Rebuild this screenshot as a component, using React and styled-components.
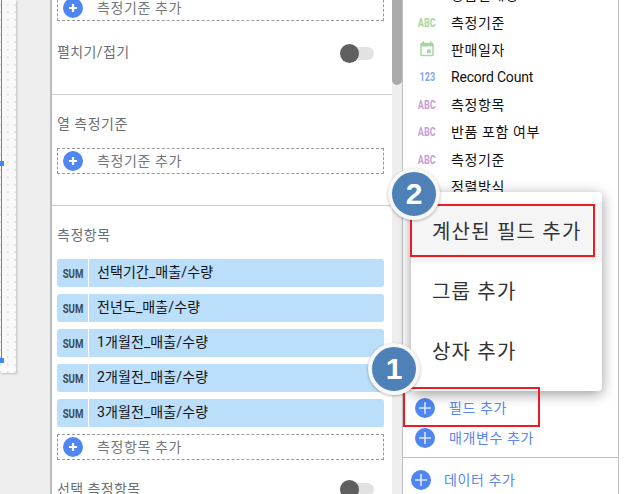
import React from 'react';
import styled, { createGlobalStyle } from 'styled-components';
import { MdEvent } from 'react-icons/md';

const FONT = `Roboto, "Noto Sans CJK KR", sans-serif`;

const GlobalStyle = createGlobalStyle`
    html, body {
        margin: 0;
        padding: 0;
        background: #fff;
    }
    * {
        box-sizing: border-box;
    }
`;

const Page = styled.div`
    position: relative;
    display: flex;
    width: 625px;
    height: 494px;
    overflow: hidden;
    background: #fff;
    font-family: ${FONT};
`;

const CanvasArea = styled.div`
    width: 50px;
    flex: none;
    background: #eeeeee;
`;

const Canvas = styled.div`
    position: relative;
    width: 16px;
    height: 373px;
    background-color: #f9f9f9;
    background-image: radial-gradient(circle, #e0e0e0 1px, transparent 1.4px);
    background-size: 7.5px 7.5px;
    background-position: 4px 1px;
    box-shadow: 1px 1px 2px rgba(0, 0, 0, 0.2);
`;

const SelectLine = styled.div`
    position: absolute;
    left: 1px;
    top: 0;
    width: 1px;
    height: 360px;
    background: #4a86e8;
`;

const SelectHandle = styled.div`
    position: absolute;
    left: 0;
    top: ${props => props.$top}px;
    width: 4px;
    height: 5px;
    background: #4285f4;
`;

const Panel = styled.div`
    width: 342px;
    flex: none;
    overflow: hidden;
    background: #fff;
    border-left: 2px solid #b9bcc0;
`;

const PanelInner = styled.div`
    margin-top: -5px;
`;

const Section = styled.section`
    padding: ${props => props.$top}px 8px 31px 5px;
    border-bottom: 1px solid #cccccc;

    &:last-child {
        border-bottom: 0;
    }
`;

const SectionTitle = styled.div`
    height: 20px;
    line-height: 20px;
    font-size: 14px;
    letter-spacing: 0.5px;
    color: #6b6e72;
    margin-bottom: 14px;
`;

// Noto sits a bit lower than the reference's face, so labels are nudged up in the flex row
const Label = styled.span`
    margin-bottom: ${props => props.$lift ?? 2}px;
    letter-spacing: ${props => props.$spacing ?? 0.6}px;
`;

const ToggleRow = styled.div`
    display: flex;
    align-items: center;
    justify-content: space-between;
    height: 20px;
    margin-top: ${props => props.$top}px;
    padding-right: 10px;
    font-size: 14px;
    color: #6b6e72;
`;

const Toggle = styled.div`
    position: relative;
    width: 34px;
    height: 13px;
`;

const ToggleTrack = styled.div`
    position: absolute;
    right: 0;
    top: 0;
    width: 29px;
    height: 13px;
    border-radius: 7px;
    background: #e2e2e2;
`;

const ToggleKnob = styled.div`
    position: absolute;
    left: 0;
    top: -3px;
    width: 19px;
    height: 19px;
    border-radius: 50%;
    background: #5f5f5f;
`;

const AddBox = styled.div`
    display: flex;
    align-items: center;
    gap: 14px;
    height: 26px;
    margin-top: ${props => props.$top || 0}px;
    padding-left: 5px;
    border: 1px dashed #999999;
    font-size: 14px;
    color: #74777b;
`;

const MetricList = styled.div`
    display: flex;
    flex-direction: column;
    gap: 7px;
`;

const Metric = styled.div`
    display: flex;
    height: 28px;
    border-radius: 3px;
    overflow: hidden;
    background: #bbdefb;
    font-size: 14px;
    color: #111;
`;

const Agg = styled.div`
    display: flex;
    align-items: center;
    justify-content: center;
    width: 32px;
    flex: none;
    border-right: 1px solid #fff;
    span {
        display: inline-block;
        font-size: 13px;
        font-weight: 700;
        color: #3d4a55;
        transform: scaleX(0.74);
    }
`;

const MetricName = styled.div`
    display: flex;
    align-items: center;
    padding-left: 8px;
`;

const Scrollbar = styled.div`
    width: 10px;
    flex: none;
    background: #eeeeee;
`;

const ScrollThumb = styled.div`
    height: 85px;
    background: #aaaaaa;
    border-radius: 0 0 5px 5px;
`;

const FieldPanel = styled.div`
    display: flex;
    flex-direction: column;
    width: 217px;
    flex: none;
    overflow: hidden;
    background: #fff;
    border-left: 1px solid #bdc1c6;
    border-right: 1px solid #bdc1c6;
`;

const FieldList = styled.div`
    margin-top: -18.5px;
    padding-left: 15px;
`;

const Field = styled.div`
    display: flex;
    align-items: center;
    gap: 15px;
    height: 27.4px;
    font-size: 14px;
    color: #111;
`;

const TypeIcon = styled.div`
    display: flex;
    align-items: center;
    justify-content: center;
    width: 18px;
    flex: none;
    color: ${props => props.$color};
    span {
        display: inline-block;
        font-size: 12px;
        font-weight: 700;
        transform: scaleX(0.76);
    }
`;

const FieldFooter = styled.div`
    margin-top: auto;
`;

const FooterRow = styled.div`
    display: flex;
    align-items: center;
    gap: 14px;
    height: 30px;
    padding-left: 12px;
    font-size: 14px;
    color: #5a86ee;
`;

const FooterRule = styled.div`
    margin-top: 4px;
    border-top: 1px solid #bdc1c6;
`;

const AddDataRow = styled.div`
    display: flex;
    align-items: center;
    gap: 13px;
    height: 20px;
    margin: 12px 0 4px;
    padding-left: 8px;
    font-size: 14px;
    color: #5a86ee;
`;

const Menu = styled.div`
    position: absolute;
    left: 411px;
    top: 192px;
    width: 191px;
    height: 199px;
    padding: 10px 0;
    background: #fff;
    border-radius: 4px;
    box-shadow: 0 3px 14px rgba(0, 0, 0, 0.4);
`;

const MenuItem = styled.div`
    display: flex;
    align-items: center;
    height: 60px;
    padding-left: 21px;
    font-size: 20px;
    letter-spacing: 1.2px;
    color: #333;
    background: ${props => (props.$active ? '#f5f5f5' : 'transparent')};
`;

const MenuLabel = styled.span`
    margin-bottom: 4px;
`;

const Callout = styled.div`
    position: absolute;
    left: ${props => props.$x}px;
    top: ${props => props.$y}px;
    width: ${props => props.$w}px;
    height: ${props => props.$h}px;
    border: 2px solid #ed1c24;
`;

const Badge = styled.div`
    position: absolute;
    left: ${props => props.$x}px;
    top: ${props => props.$y}px;
    display: flex;
    align-items: center;
    justify-content: center;
    width: 52px;
    height: 52px;
    border: 4px solid #f7f7f7;
    border-radius: 50%;
    background: #4f81b9;
    box-shadow: 0 1px 3px rgba(0, 0, 0, 0.3);
    font-family: "Liberation Sans", Arial, sans-serif;
    font-size: 30px;
    font-weight: 700;
    color: #fff;
`;

const PlusIcon = ({ arm = 4, weight = 2.2, color = '#fff' }) => (
    <svg width={20} height={20} viewBox="0 0 20 20" style={{ flex: 'none' }}>
        <circle cx="10" cy="10" r="10" fill="#4f86f2" />
        <path d={`M${10 - arm} 10h${arm * 2}M10 ${10 - arm}v${arm * 2}`} stroke={color} strokeWidth={weight} fill="none" />
    </svg>
);

const FooterPlus = () => <PlusIcon arm={6} weight={1.6} color="#dbe6fb" />;

const fields = [
    { label: '상품판매명', kind: 'abc', color: '#a8d5a2' },
    { label: '측정기준', kind: 'abc', color: '#a8d5a2' },
    { label: '판매일자', kind: 'date', color: '#a8d5a2' },
    { label: 'Record Count', kind: 'num', color: '#7fa8f5' },
    { label: '측정항목', kind: 'abc', color: '#c5a0d4' },
    { label: '반품 포함 여부', kind: 'abc', color: '#c5a0d4' },
    { label: '측정기준', kind: 'abc', color: '#c5a0d4' },
    { label: '정렬방식', kind: 'abc', color: '#c5a0d4' },
];

const metrics = [
    '선택기간_매출/수량',
    '전년도_매출/수량',
    '1개월전_매출/수량',
    '2개월전_매출/수량',
    '3개월전_매출/수량',
];

const FieldType = ({ kind, color }) => (
    <TypeIcon $color={color}>
        {kind === 'date' ? <MdEvent size={23} /> : <span>{kind === 'num' ? '123' : 'ABC'}</span>}
    </TypeIcon>
);

const App = () => (
    <Page>
        <GlobalStyle />
        <CanvasArea>
            <Canvas>
                <SelectLine />
                <SelectHandle $top={161} />
                <SelectHandle $top={358} />
            </Canvas>
        </CanvasArea>

        <Panel>
            <PanelInner>
                <Section $top={0}>
                    <AddBox>
                        <PlusIcon />
                        <Label>측정기준 추가</Label>
                    </AddBox>
                    <ToggleRow $top={22}>
                        <Label $spacing={0.4} $lift={5}>펼치기/접기</Label>
                        <Toggle>
                            <ToggleTrack />
                            <ToggleKnob />
                        </Toggle>
                    </ToggleRow>
                </Section>
                <Section $top={19}>
                    <SectionTitle>열 측정기준</SectionTitle>
                    <AddBox>
                        <PlusIcon />
                        <Label>측정기준 추가</Label>
                    </AddBox>
                </Section>
                <Section $top={19}>
                    <SectionTitle>측정항목</SectionTitle>
                    <MetricList>
                        {metrics.map(name => (
                            <Metric key={name}>
                                <Agg><span>SUM</span></Agg>
                                <MetricName>
                                    <Label $spacing={0.1} $lift={4}>{name}</Label>
                                </MetricName>
                            </Metric>
                        ))}
                    </MetricList>
                    <AddBox $top={7}>
                        <PlusIcon />
                        <Label>측정항목 추가</Label>
                    </AddBox>
                    <ToggleRow $top={19}>
                        <Label $spacing={0.4}>선택 측정항목</Label>
                        <Toggle>
                            <ToggleTrack />
                            <ToggleKnob />
                        </Toggle>
                    </ToggleRow>
                </Section>
            </PanelInner>
        </Panel>

        <Scrollbar>
            <ScrollThumb />
        </Scrollbar>

        <FieldPanel>
            <FieldList>
                {fields.map((field, index) => (
                    <Field key={index}>
                        <FieldType kind={field.kind} color={field.color} />
                        <Label
                            $spacing={field.kind === 'num' ? -0.2 : 0.6}
                            $lift={field.kind === 'num' ? 0 : 2}
                        >
                            {field.label}
                        </Label>
                    </Field>
                ))}
            </FieldList>
            <FieldFooter>
                <FooterRow>
                    <FooterPlus />
                    <Label $lift={3}>필드 추가</Label>
                </FooterRow>
                <FooterRow>
                    <FooterPlus />
                    <Label $lift={3}>매개변수 추가</Label>
                </FooterRow>
                <FooterRule />
                <AddDataRow>
                    <FooterPlus />
                    <Label>데이터 추가</Label>
                </AddDataRow>
            </FieldFooter>
        </FieldPanel>

        <Menu>
            <MenuItem $active><MenuLabel>계산된 필드 추가</MenuLabel></MenuItem>
            <MenuItem><MenuLabel>그룹 추가</MenuLabel></MenuItem>
            <MenuItem><MenuLabel>상자 추가</MenuLabel></MenuItem>
        </Menu>

        <Callout $x={410} $y={204} $w={185} $h={53} />
        <Callout $x={403} $y={387} $w={137} $h={40} />
        <Badge $x={368} $y={343}>1</Badge>
        <Badge $x={388} $y={168}>2</Badge>
    </Page>
);

export default App;
